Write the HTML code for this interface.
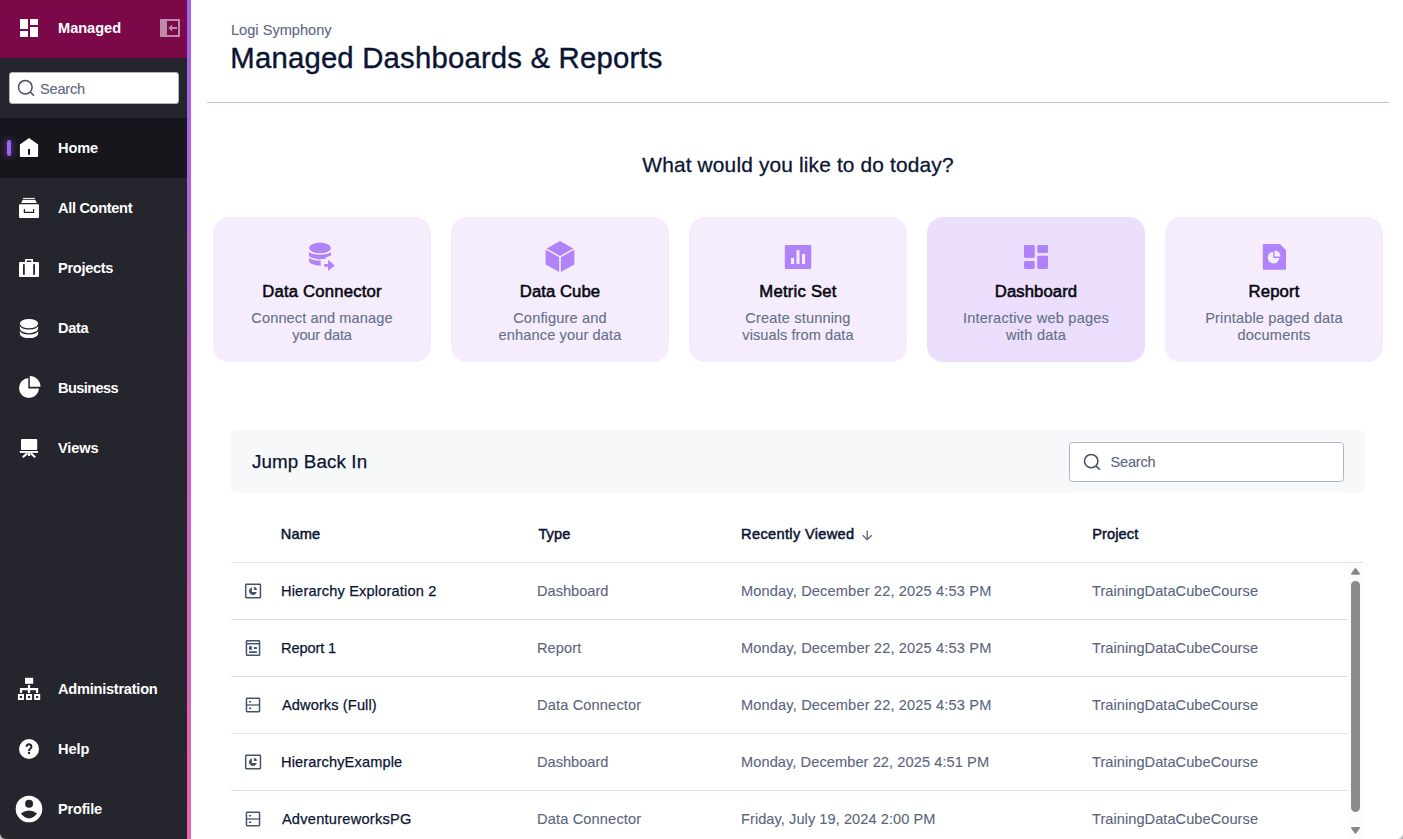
<!DOCTYPE html>
<html lang="en">
<head>
<meta charset="utf-8">
<title>Managed Dashboards &amp; Reports</title>
<style>
*{box-sizing:border-box;margin:0;padding:0}
html,body{width:1403px;height:839px;overflow:hidden;background:#fff;font-family:"Liberation Sans",sans-serif;color:#0b1533}
body{position:relative}
.abs{position:absolute}
svg{display:block;overflow:visible}
.ic{position:absolute}
#side{position:absolute;left:0;top:0;width:187px;height:839px;background:#25252e;border-bottom-left-radius:6px}
#bar{position:absolute;left:187px;top:0;width:4px;height:839px;background:linear-gradient(180deg,#a163ee 0%,#ec62ae 100%)}
#brand{position:absolute;left:0;top:0;width:187px;height:58px;background:#7b0848}
.navt{position:absolute;left:58px;color:#fff;font-weight:bold;font-size:14.6px;line-height:20px;white-space:nowrap}
#sbox{position:absolute;left:9px;top:72px;width:170px;height:32px;background:#fff;border:1px solid #a9b4c8;border-radius:3px}
.ph{-webkit-text-stroke:.12px #5c6782;position:absolute;font-size:14.6px;line-height:20px;color:#5c6782;letter-spacing:-.2px;white-space:nowrap}
#homebg{position:absolute;left:0;top:118px;width:187px;height:60px;background:#16161c}
#homepill{position:absolute;left:7px;top:140px;width:4px;height:16px;border-radius:2px;background:#a364f2;box-shadow:0 0 7px 2px rgba(150,90,235,.38)}
#sub{-webkit-text-stroke:.12px #5c6782;position:absolute;left:231px;top:20px;font-size:14.6px;line-height:20px;color:#5c6782;white-space:nowrap}
#title{position:absolute;left:230.3px;-webkit-text-stroke:.4px #0b1533;top:38px;font-size:29.3px;line-height:40px;color:#0b1533;white-space:nowrap;letter-spacing:.2px}
#hr{position:absolute;left:207px;top:102px;width:1182px;height:1px;background:#b9c3d9}
#what{-webkit-text-stroke:.28px #0b1533;position:absolute;left:191px;width:1214px;top:151px;text-align:center;font-size:20.9px;line-height:28px;color:#0b1533;white-space:nowrap;letter-spacing:.15px}
.card{position:absolute;top:217px;width:218px;height:145px;border-radius:16px;background:#f5edfe;text-align:center}
.card.hov{background:#ecdefd}
.card h3{position:absolute;left:0;right:0;top:63px;font-size:16.7px;line-height:24px;font-weight:normal;-webkit-text-stroke:.55px #07070f;color:#07070f;white-space:nowrap}
.card p{-webkit-text-stroke:.12px #667089;position:absolute;left:0;right:0;font-size:14.6px;line-height:17px;color:#667089;white-space:nowrap}
.card p.l1{top:93px}.card p.l2{top:110px}
#jump{position:absolute;left:231px;top:430.3px;width:1134px;height:63.2px;background:#f6f8fa;border-radius:5px}
#jump span{-webkit-text-stroke:.25px #0b1533;position:absolute;left:21px;top:19.7px;font-size:18.8px;line-height:24px;color:#0b1533;white-space:nowrap;letter-spacing:.12px}
#s2{position:absolute;left:1069px;top:442px;width:275px;height:40px;background:#fff;border:1px solid #a9b6cc;border-radius:3.5px}
.th{position:absolute;top:524px;font-size:14.6px;line-height:20px;font-weight:normal;-webkit-text-stroke:.5px #0b1533;color:#0b1533;white-space:nowrap}
.rl{position:absolute;left:231px;width:1117px;height:1px;background:#dde1ee}
.row{position:absolute;left:0;width:1403px;height:57px}
.row span{position:absolute;top:19px;font-size:14.6px;line-height:20px;white-space:nowrap}
.row .n{left:281px;color:#0b1533;-webkit-text-stroke:.25px #0b1533}
.row .t{left:537px;color:#5c6580;-webkit-text-stroke:.12px #5c6580}
.row .d{left:741px;color:#5c6580;-webkit-text-stroke:.12px #5c6580}
.row .p{left:1092px;color:#5c6580;-webkit-text-stroke:.12px #5c6580}
#track{position:absolute;left:1348px;top:564px;width:15px;height:275px;background:#fcfcfc}
#thumb{position:absolute;left:1351px;top:580.6px;width:9px;height:231.4px;border-radius:4.5px;background:#8b8b8b}
</style>
</head>
<body>
<div class="abs" style="left:0;bottom:0;width:8px;height:8px;background:#bdbdbd"></div><div class="abs" style="right:0;bottom:0;width:5px;height:5px;background:radial-gradient(circle at 0 0,rgba(176,176,176,0) 4px,#b0b0b0 5.6px)"></div>
<div id="side"></div><div id="bar"></div><div id="brand"></div>
<svg class="ic" style="left:16.5px;top:16px" width="24" height="24" viewBox="0 0 24 24"><path fill="#fff" d="M3 13h8V3H3v10zm0 8h8v-6H3v6zm10 0h8V11h-8v10zm0-18v6h8V3h-8z"/></svg>
<div class="navt" style="top:18px;letter-spacing:-.03px">Managed</div>
<svg class="ic" style="left:160px;top:19px" width="20" height="18" viewBox="160 19 20 18"><path fill="#fff" fill-opacity=".52" fill-rule="evenodd" d="M160 19H180V37H160ZM167 21V35H178V21Z"/><path fill="#fff" fill-opacity=".52" d="M168.3 28L172.2 24.6V27.1H177V28.9H172.2V31.4Z"/></svg>
<div id="sbox"></div>
<svg class="ic" style="left:16px;top:78px" width="20" height="20" viewBox="16 78 20 20"><circle cx="25.3" cy="87.2" r="6.8" fill="none" stroke="#454f63" stroke-width="1.5"/><path d="M30.2 92L34 95.8" stroke="#454f63" stroke-width="1.5" fill="none"/></svg>
<div class="ph" style="left:40px;top:79px">Search</div>
<div id="homebg"></div><div id="homepill"></div>
<svg class="ic" style="left:17px;top:136px" width="24" height="24" viewBox="17 136 24 24"><path fill="#fff" d="M29 138L38.1 144.6V156.2Q38.1 157 37.3 157H20.7Q19.9 157 19.9 156.2V144.6Z"/><rect x="28" y="149" width="2" height="5.8" fill="#16161c"/></svg>
<div class="navt" style="top:138px;letter-spacing:-0.12px">Home</div>
<svg class="ic" style="left:17px;top:196px" width="24" height="24" viewBox="17 196 24 24"><rect x="23" y="197.9" width="12" height="1.3" fill="#fff" opacity=".9"/><path fill="#fff" d="M22.6 200H35.4L36.9 203H21.1Z"/><rect x="19" y="204.2" width="20" height="13.8" rx="1" fill="#fff"/><path fill="none" stroke="#25252e" stroke-width="1.25" d="M24.4 209V212.4H33.6V209"/></svg>
<div class="navt" style="top:198px;letter-spacing:-0.33px">All Content</div>
<svg class="ic" style="left:17px;top:256px" width="24" height="24" viewBox="17 256 24 24"><path fill="#fff" fill-rule="evenodd" d="M25 259H33V262H25ZM26.7 260.5H31.3V262H26.7Z"/><rect x="19" y="261.9" width="20" height="15.1" rx="1" fill="#fff"/><rect x="23" y="264.2" width="1.8" height="10.6" fill="#25252e"/><rect x="33.2" y="264.2" width="1.8" height="10.6" fill="#25252e"/></svg>
<div class="navt" style="top:258px;letter-spacing:-0.3px">Projects</div>
<svg class="ic" style="left:17px;top:316px" width="24" height="24" viewBox="17 316 24 24"><path fill="#fff" d="M19.9 323.6A9.1 4.7 0 0 1 38.1 323.6V334A9.1 4.1 0 0 1 19.9 334Z"/><path fill="none" stroke="#25252e" stroke-width="1.4" d="M19.6 324.3A9.4 4.6 0 0 0 38.4 324.3M19.6 329.25A9.4 4.6 0 0 0 38.4 329.25"/></svg>
<div class="navt" style="top:318px;letter-spacing:-0.38px">Data</div>
<svg class="ic" style="left:17px;top:376px" width="24" height="24" viewBox="17 376 24 24"><path fill="#fff" d="M28.3 378.02A10 10 0 1 0 38.99 388.5H28.3Z"/><path fill="#fff" d="M29.8 386.8V376.1A10.7 10.7 0 0 1 40.5 386.8Z"/></svg>
<div class="navt" style="top:378px;letter-spacing:-0.62px">Business</div>
<svg class="ic" style="left:17px;top:436px" width="24" height="24" viewBox="17 436 24 24"><rect x="21" y="439" width="16.2" height="11" rx=".8" fill="#fff"/><rect x="19.8" y="451" width="18.3" height="1.9" fill="#fff"/><rect x="27.9" y="452.9" width="2.2" height="3.1" fill="#fff"/><path fill="none" stroke="#fff" stroke-width="2.1" d="M27.2 453.2L22.8 457.2M30.8 453.2L35.2 457.2"/></svg>
<div class="navt" style="top:438px;letter-spacing:-0.15px">Views</div>
<svg class="ic" style="left:17px;top:677px" width="24" height="24" viewBox="17 677 24 24"><rect x="25" y="677.8" width="8.2" height="6" fill="#fff"/><path fill="none" stroke="#fff" stroke-width="2.2" d="M29 685.1V693M19.9 689.15H38.2M21 688.1V693M37.1 688.1V693"/><path fill="#fff" fill-rule="evenodd" d="M17.9 694.1h6.1v6h-6.1ZM19.9 696.1h2.1v2h-2.1Z"/><path fill="#fff" fill-rule="evenodd" d="M26 694.1h6.1v6h-6.1ZM28 696.1h2.1v2h-2.1Z"/><path fill="#fff" fill-rule="evenodd" d="M34.1 694.1h6.1v6h-6.1ZM36.1 696.1h2.1v2h-2.1Z"/></svg>
<div class="navt" style="top:679px;letter-spacing:-0.25px">Administration</div>
<svg class="ic" style="left:17px;top:737px" width="24" height="24" viewBox="17 737 24 24"><circle cx="29" cy="749" r="10" fill="#fff"/><path fill="none" stroke="#25252e" stroke-width="2.1" d="M26.6 746.8A2.4 2.4 0 1 1 30.5 748.5Q29 749.5 29 750.9"/><rect x="27.95" y="751.9" width="2.1" height="2.1" fill="#25252e"/></svg>
<div class="navt" style="top:739px;letter-spacing:-0.05px">Help</div>
<svg class="ic" style="left:13px;top:793px" width="32" height="32" viewBox="13 793 32 32"><path fill="#fff" fill-rule="evenodd" d="M15.7 809A13.3 13.3 0 1 0 42.3 809A13.3 13.3 0 1 0 15.7 809ZM25.1 803.8A4 4 0 1 0 33.1 803.8A4 4 0 1 0 25.1 803.8ZM20.9 813.5Q29 807.4 37.1 813.5Q29 823.3 20.9 813.5Z"/></svg>
<div class="navt" style="top:799px;letter-spacing:-.22px">Profile</div>
<div id="sub">Logi Symphony</div>
<div id="title">Managed Dashboards &amp; Reports</div>
<div id="hr"></div>
<div id="what">What would you like to do today?</div>
<div class="card" style="left:213px"><h3 style="letter-spacing:0.18px">Data Connector</h3><p class="l1" style="letter-spacing:0.1px">Connect and manage</p><p class="l2" style="letter-spacing:-0.15px">your data</p></div>
<div class="card" style="left:451px"><h3 style="letter-spacing:0.06px">Data Cube</h3><p class="l1" style="letter-spacing:0.15px">Configure and</p><p class="l2" style="letter-spacing:0.12px">enhance your data</p></div>
<div class="card" style="left:689px"><h3 style="letter-spacing:0.22px">Metric Set</h3><p class="l1" style="letter-spacing:0.15px">Create stunning</p><p class="l2" style="letter-spacing:0.06px">visuals from data</p></div>
<div class="card hov" style="left:927px"><h3 style="letter-spacing:0.09px">Dashboard</h3><p class="l1" style="letter-spacing:0.2px">Interactive web pages</p><p class="l2" style="letter-spacing:0.2px">with data</p></div>
<div class="card" style="left:1165px"><h3 style="letter-spacing:0.14px">Report</h3><p class="l1" style="letter-spacing:0.15px">Printable paged data</p><p class="l2" style="letter-spacing:0.18px">documents</p></div>
<svg class="ic" style="left:306px;top:240px" width="32" height="32" viewBox="306 240 32 32"><ellipse cx="320" cy="247.9" rx="11" ry="5.3" fill="#b183fa"/><path fill="#b183fa" d="M309 252.3A13 5.14 0 0 0 331 252.3V255.4A13 5.14 0 0 1 326 257.2V258.55A13 5.78 0 0 1 309 256.5Z"/><path fill="#b183fa" d="M309 258A13 5.57 0 0 0 320.7 260.6V265.8A11 5.3 0 0 1 309 260.5Z"/><path fill="#b183fa" d="M324.1 264.1H328.1V259.8L334.8 265.4L328.1 271.1V266.7H324.1Z"/></svg>
<svg class="ic" style="left:544px;top:240px" width="32" height="34" viewBox="544 240 32 34"><path fill="#b183fa" d="M560 241L573.3 248.5L560 255.9L546.7 248.5Z"/><path fill="#b183fa" d="M545.6 249.6L559.2 257.3V272.1L545.6 264.4Z"/><path fill="#b183fa" d="M574.4 249.6L560.8 257.3V272.1L574.4 264.4Z"/></svg>
<svg class="ic" style="left:784px;top:244px" width="28" height="26" viewBox="784 244 28 26"><rect x="784.8" y="245" width="26.4" height="24" rx="1" fill="#b183fa"/><rect x="791" y="258" width="3.1" height="6" fill="#f5edfe"/><rect x="796.5" y="250.1" width="3" height="13.9" fill="#f5edfe"/><rect x="802" y="254" width="3.1" height="10" fill="#f5edfe"/></svg>
<svg class="ic" style="left:1023px;top:244px" width="26" height="26" viewBox="1023 244 26 26"><rect x="1024" y="245" width="10.7" height="13" rx="1.4" fill="#b183fa"/><rect x="1024" y="261" width="10.7" height="8" rx="1.4" fill="#b183fa"/><rect x="1037.3" y="245" width="10.7" height="8" rx="1.4" fill="#b183fa"/><rect x="1037.3" y="255.7" width="10.7" height="13.3" rx="1.4" fill="#b183fa"/></svg>
<svg class="ic" style="left:1262px;top:243px" width="26" height="28" viewBox="1262 243 26 28"><path fill="#b183fa" d="M1263.8 244H1279.8L1286 250.3V268.8Q1286 269.8 1285 269.8H1263.8Q1262.8 269.8 1262.8 268.8V245Q1262.8 244 1263.8 244Z"/><path fill="#f5edfe" d="M1273.2 251.9A5.8 5.8 0 1 0 1279.3 258H1273.2Z"/><path fill="#f5edfe" d="M1274.5 256.6V250.6A6 6 0 0 1 1280.5 256.6Z"/></svg>
<div id="jump"><span>Jump Back In</span></div>
<div id="s2"></div>
<svg class="ic" style="left:1082px;top:452px" width="20" height="20" viewBox="1082 452 20 20"><circle cx="1091.2" cy="461.1" r="6.7" fill="none" stroke="#454f63" stroke-width="1.5"/><path d="M1096 465.9L1099.9 469.8" stroke="#454f63" stroke-width="1.5" fill="none"/></svg>
<div class="ph" style="left:1110.5px;top:452px">Search</div>
<div class="th" style="left:280.7px;letter-spacing:0.15px">Name</div>
<div class="th" style="left:538.4px;letter-spacing:0.1px">Type</div>
<div class="th" style="left:741.1px;letter-spacing:0.33px">Recently Viewed</div>
<div class="th" style="left:1092.2px;letter-spacing:0.1px">Project</div>
<svg class="ic" style="left:860px;top:528px" width="14" height="14" viewBox="860 528 14 14"><path fill="none" stroke="#5a6580" stroke-width="1.3" d="M867.2 530.6V539.6M862.6 535.2L867.2 539.7L871.8 535.2"/></svg>
<div class="rl" style="top:562px;width:1132px;background:#dde1ee"></div>
<div class="rl" style="top:619px"></div>
<div class="rl" style="top:676px"></div>
<div class="rl" style="top:733px"></div>
<div class="rl" style="top:790px"></div>
<div id="track"></div><div id="thumb"></div>
<svg class="ic" style="left:1351px;top:567px" width="10" height="8" viewBox="1351 567 10 8"><path fill="#858585" d="M1355.5 568.7L1359.3 574H1351.7Z" stroke="#858585" stroke-width="1.4" stroke-linejoin="round"/></svg>
<svg class="ic" style="left:1351px;top:826px" width="10" height="8" viewBox="1351 826 10 8"><path fill="#858585" d="M1351.7 827.8H1359.3L1355.5 833.1Z" stroke="#858585" stroke-width="1.4" stroke-linejoin="round"/></svg>
<svg class="ic" style="left:244px;top:582px" width="18" height="18" viewBox="244 582 18 18"><rect x="245.7" y="584.35" width="14.75" height="13.35" rx=".7" fill="none" stroke="#47526b" stroke-width="1.5"/><path fill="#47526b" d="M251.9 587.15A4 4 0 1 0 256.85 592.1H251.9Z"/><path fill="#47526b" d="M253.9 589.9V586.9A3 3 0 0 1 256.9 589.9Z"/></svg>
<div class="row" style="top:562px"><span class="n" style="letter-spacing:0.17px">Hierarchy Exploration 2</span><span class="t" style="letter-spacing:0.01px">Dashboard</span><span class="d" style="letter-spacing:0.15px">Monday, December 22, 2025 4:53 PM</span><span class="p" style="letter-spacing:.05px">TrainingDataCubeCourse</span></div>
<svg class="ic" style="left:244px;top:639px" width="18" height="18" viewBox="244 639 18 18"><rect x="246.45" y="640.75" width="13.1" height="14.6" rx=".7" fill="none" stroke="#47526b" stroke-width="1.5"/><path stroke="#47526b" stroke-width="1.5" d="M246.3 643.7H259.7"/><rect x="249" y="646.2" width="2.9" height="3.5" rx=".3" fill="#47526b"/><rect x="253.9" y="647.1" width="3.1" height="1.8" rx=".3" fill="#47526b"/><rect x="249" y="651.3" width="8" height="1.7" rx=".3" fill="#47526b"/></svg>
<div class="row" style="top:619px"><span class="n" style="letter-spacing:-0.12px">Report 1</span><span class="t" style="letter-spacing:0.08px">Report</span><span class="d" style="letter-spacing:0.15px">Monday, December 22, 2025 4:53 PM</span><span class="p" style="letter-spacing:.05px">TrainingDataCubeCourse</span></div>
<svg class="ic" style="left:244px;top:695.9px" width="18" height="18" viewBox="244 695.9 18 18"><rect x="246.45" y="698.15" width="13.1" height="13.5" rx=".7" fill="none" stroke="#47526b" stroke-width="1.5"/><path stroke="#47526b" stroke-width="1.5" stroke-opacity=".85" d="M246.3 704.9H259.7"/><rect x="248.9" y="700.9" width="2.4" height="1.5" rx=".7" fill="#47526b"/><rect x="248.9" y="707.5" width="2.4" height="1.5" rx=".7" fill="#47526b"/></svg>
<div class="row" style="top:676px"><span class="n" style="letter-spacing:0.12px;margin-left:.9px">Adworks (Full)</span><span class="t" style="letter-spacing:0.15px">Data Connector</span><span class="d" style="letter-spacing:0.15px">Monday, December 22, 2025 4:53 PM</span><span class="p" style="letter-spacing:.05px">TrainingDataCubeCourse</span></div>
<svg class="ic" style="left:244px;top:753px" width="18" height="18" viewBox="244 753 18 18"><rect x="245.7" y="755.35" width="14.75" height="13.35" rx=".7" fill="none" stroke="#47526b" stroke-width="1.5"/><path fill="#47526b" d="M251.9 758.15A4 4 0 1 0 256.85 763.1H251.9Z"/><path fill="#47526b" d="M253.9 760.9V757.9A3 3 0 0 1 256.9 760.9Z"/></svg>
<div class="row" style="top:733px"><span class="n" style="letter-spacing:0.13px">HierarchyExample</span><span class="t" style="letter-spacing:0.01px">Dashboard</span><span class="d" style="letter-spacing:0.08px">Monday, December 22, 2025 4:51 PM</span><span class="p" style="letter-spacing:.05px">TrainingDataCubeCourse</span></div>
<svg class="ic" style="left:244px;top:809.9px" width="18" height="18" viewBox="244 809.9 18 18"><rect x="246.45" y="812.15" width="13.1" height="13.5" rx=".7" fill="none" stroke="#47526b" stroke-width="1.5"/><path stroke="#47526b" stroke-width="1.5" stroke-opacity=".85" d="M246.3 818.9H259.7"/><rect x="248.9" y="814.9" width="2.4" height="1.5" rx=".7" fill="#47526b"/><rect x="248.9" y="821.5" width="2.4" height="1.5" rx=".7" fill="#47526b"/></svg>
<div class="row" style="top:790px"><span class="n" style="letter-spacing:0.25px;margin-left:.9px">AdventureworksPG</span><span class="t" style="letter-spacing:0.15px">Data Connector</span><span class="d" style="letter-spacing:0.06px">Friday, July 19, 2024 2:00 PM</span><span class="p" style="letter-spacing:.05px">TrainingDataCubeCourse</span></div>
</body>
</html>
